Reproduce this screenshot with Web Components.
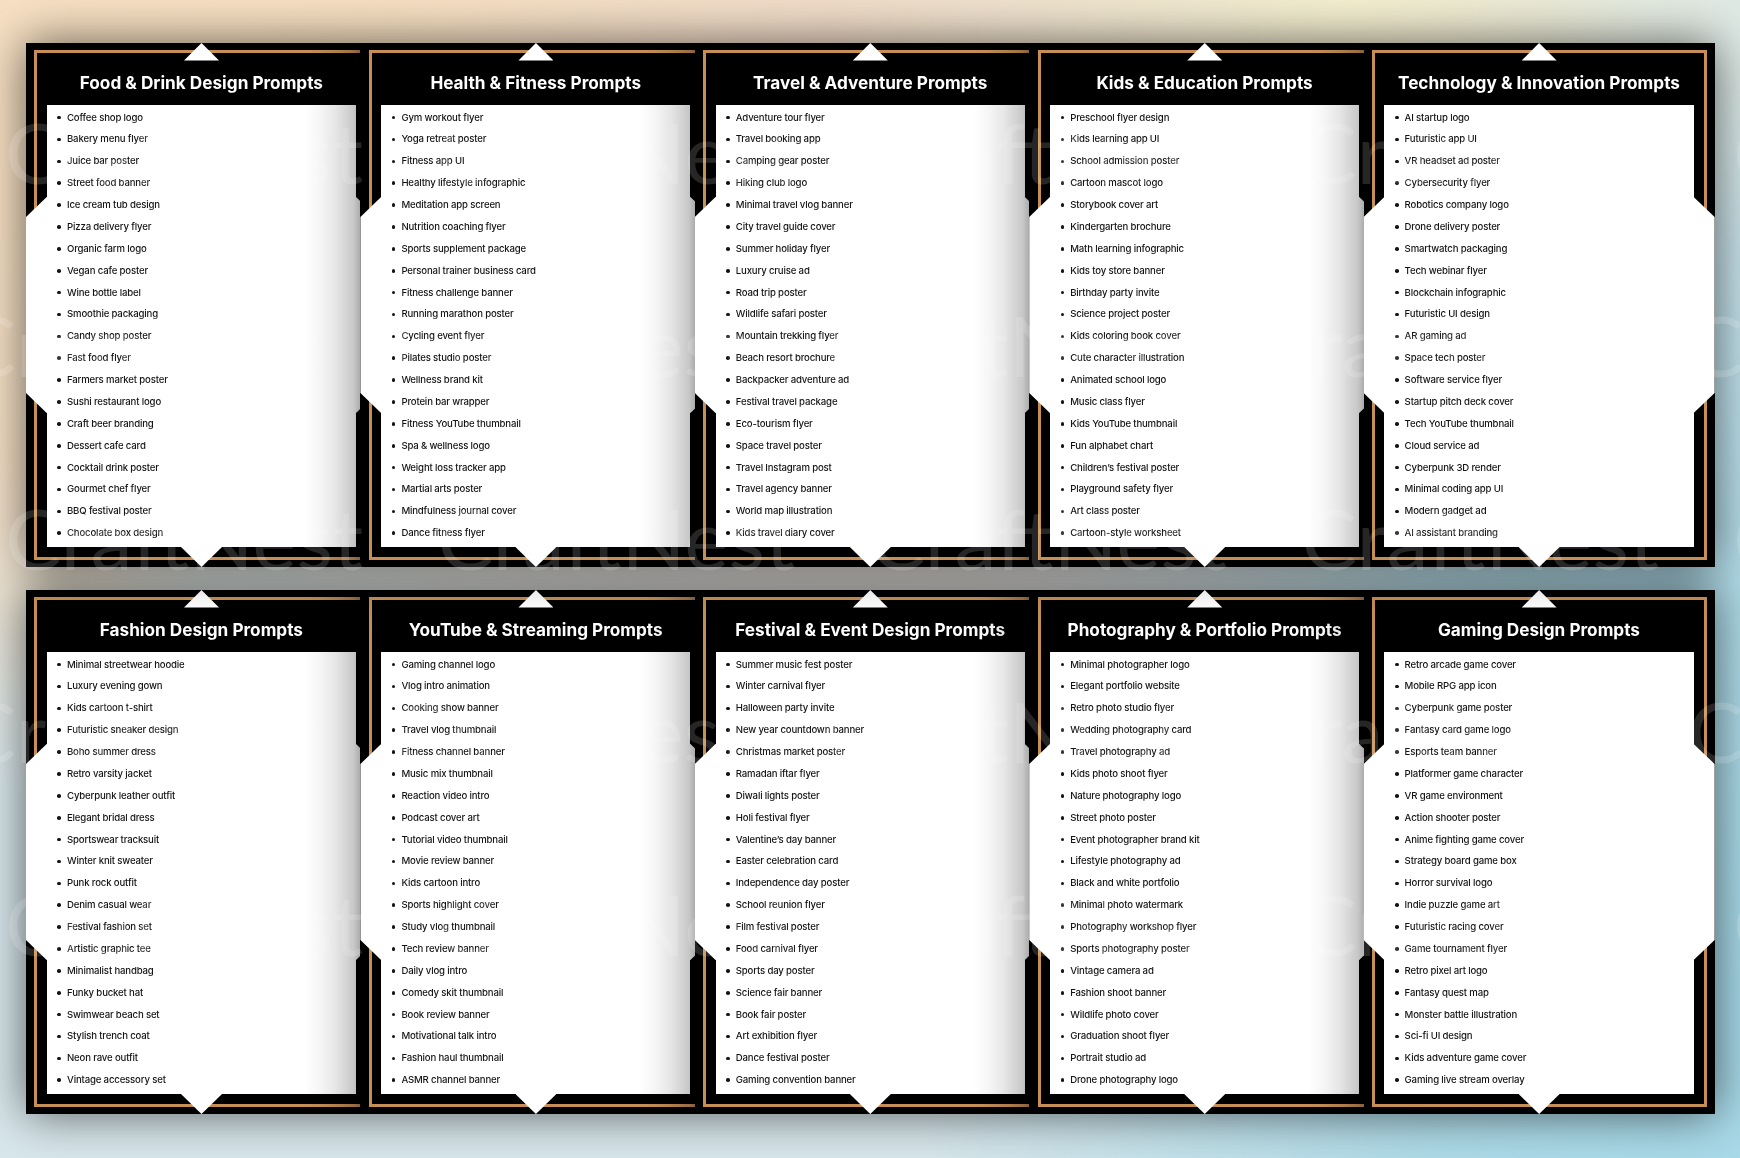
<!DOCTYPE html>
<html>
<head>
<meta charset="utf-8">
<title>Design Prompts</title>
<style>
  html, body { margin: 0; padding: 0; }
  body { width: 1740px; height: 1158px; overflow: hidden; font-family: "Inter", "Liberation Sans", sans-serif; }
</style>
</head>
<body>
<prompt-board>
  <prompt-sheet style="z-index:2">
    <prompt-panel heading="Food &amp; Drink Design Prompts">
      <li>Coffee shop logo</li><li>Bakery menu flyer</li><li>Juice bar poster</li><li>Street food banner</li><li>Ice cream tub design</li><li>Pizza delivery flyer</li><li>Organic farm logo</li><li>Vegan cafe poster</li><li>Wine bottle label</li><li>Smoothie packaging</li><li>Candy shop poster</li><li>Fast food flyer</li><li>Farmers market poster</li><li>Sushi restaurant logo</li><li>Craft beer branding</li><li>Dessert cafe card</li><li>Cocktail drink poster</li><li>Gourmet chef flyer</li><li>BBQ festival poster</li><li>Chocolate box design</li>
    </prompt-panel>
    <prompt-panel heading="Health &amp; Fitness Prompts">
      <li>Gym workout flyer</li><li>Yoga retreat poster</li><li>Fitness app UI</li><li>Healthy lifestyle infographic</li><li>Meditation app screen</li><li>Nutrition coaching flyer</li><li>Sports supplement package</li><li>Personal trainer business card</li><li>Fitness challenge banner</li><li>Running marathon poster</li><li>Cycling event flyer</li><li>Pilates studio poster</li><li>Wellness brand kit</li><li>Protein bar wrapper</li><li>Fitness YouTube thumbnail</li><li>Spa &amp; wellness logo</li><li>Weight loss tracker app</li><li>Martial arts poster</li><li>Mindfulness journal cover</li><li>Dance fitness flyer</li>
    </prompt-panel>
    <prompt-panel heading="Travel &amp; Adventure Prompts">
      <li>Adventure tour flyer</li><li>Travel booking app</li><li>Camping gear poster</li><li>Hiking club logo</li><li>Minimal travel vlog banner</li><li>City travel guide cover</li><li>Summer holiday flyer</li><li>Luxury cruise ad</li><li>Road trip poster</li><li>Wildlife safari poster</li><li>Mountain trekking flyer</li><li>Beach resort brochure</li><li>Backpacker adventure ad</li><li>Festival travel package</li><li>Eco-tourism flyer</li><li>Space travel poster</li><li>Travel Instagram post</li><li>Travel agency banner</li><li>World map illustration</li><li>Kids travel diary cover</li>
    </prompt-panel>
    <prompt-panel heading="Kids &amp; Education Prompts">
      <li>Preschool flyer design</li><li>Kids learning app UI</li><li>School admission poster</li><li>Cartoon mascot logo</li><li>Storybook cover art</li><li>Kindergarten brochure</li><li>Math learning infographic</li><li>Kids toy store banner</li><li>Birthday party invite</li><li>Science project poster</li><li>Kids coloring book cover</li><li>Cute character illustration</li><li>Animated school logo</li><li>Music class flyer</li><li>Kids YouTube thumbnail</li><li>Fun alphabet chart</li><li>Children’s festival poster</li><li>Playground safety flyer</li><li>Art class poster</li><li>Cartoon-style worksheet</li>
    </prompt-panel>
    <prompt-panel heading="Technology &amp; Innovation Prompts">
      <li>AI startup logo</li><li>Futuristic app UI</li><li>VR headset ad poster</li><li>Cybersecurity flyer</li><li>Robotics company logo</li><li>Drone delivery poster</li><li>Smartwatch packaging</li><li>Tech webinar flyer</li><li>Blockchain infographic</li><li>Futuristic UI design</li><li>AR gaming ad</li><li>Space tech poster</li><li>Software service flyer</li><li>Startup pitch deck cover</li><li>Tech YouTube thumbnail</li><li>Cloud service ad</li><li>Cyberpunk 3D render</li><li>Minimal coding app UI</li><li>Modern gadget ad</li><li>AI assistant branding</li>
    </prompt-panel>
  </prompt-sheet>
  <prompt-sheet style="z-index:1">
    <prompt-panel heading="Fashion Design Prompts">
      <li>Minimal streetwear hoodie</li><li>Luxury evening gown</li><li>Kids cartoon t-shirt</li><li>Futuristic sneaker design</li><li>Boho summer dress</li><li>Retro varsity jacket</li><li>Cyberpunk leather outfit</li><li>Elegant bridal dress</li><li>Sportswear tracksuit</li><li>Winter knit sweater</li><li>Punk rock outfit</li><li>Denim casual wear</li><li>Festival fashion set</li><li>Artistic graphic tee</li><li>Minimalist handbag</li><li>Funky bucket hat</li><li>Swimwear beach set</li><li>Stylish trench coat</li><li>Neon rave outfit</li><li>Vintage accessory set</li>
    </prompt-panel>
    <prompt-panel heading="YouTube &amp; Streaming Prompts">
      <li>Gaming channel logo</li><li>Vlog intro animation</li><li>Cooking show banner</li><li>Travel vlog thumbnail</li><li>Fitness channel banner</li><li>Music mix thumbnail</li><li>Reaction video intro</li><li>Podcast cover art</li><li>Tutorial video thumbnail</li><li>Movie review banner</li><li>Kids cartoon intro</li><li>Sports highlight cover</li><li>Study vlog thumbnail</li><li>Tech review banner</li><li>Daily vlog intro</li><li>Comedy skit thumbnail</li><li>Book review banner</li><li>Motivational talk intro</li><li>Fashion haul thumbnail</li><li>ASMR channel banner</li>
    </prompt-panel>
    <prompt-panel heading="Festival &amp; Event Design Prompts">
      <li>Summer music fest poster</li><li>Winter carnival flyer</li><li>Halloween party invite</li><li>New year countdown banner</li><li>Christmas market poster</li><li>Ramadan iftar flyer</li><li>Diwali lights poster</li><li>Holi festival flyer</li><li>Valentine’s day banner</li><li>Easter celebration card</li><li>Independence day poster</li><li>School reunion flyer</li><li>Film festival poster</li><li>Food carnival flyer</li><li>Sports day poster</li><li>Science fair banner</li><li>Book fair poster</li><li>Art exhibition flyer</li><li>Dance festival poster</li><li>Gaming convention banner</li>
    </prompt-panel>
    <prompt-panel heading="Photography &amp; Portfolio Prompts">
      <li>Minimal photographer logo</li><li>Elegant portfolio website</li><li>Retro photo studio flyer</li><li>Wedding photography card</li><li>Travel photography ad</li><li>Kids photo shoot flyer</li><li>Nature photography logo</li><li>Street photo poster</li><li>Event photographer brand kit</li><li>Lifestyle photography ad</li><li>Black and white portfolio</li><li>Minimal photo watermark</li><li>Photography workshop flyer</li><li>Sports photography poster</li><li>Vintage camera ad</li><li>Fashion shoot banner</li><li>Wildlife photo cover</li><li>Graduation shoot flyer</li><li>Portrait studio ad</li><li>Drone photography logo</li>
    </prompt-panel>
    <prompt-panel heading="Gaming Design Prompts">
      <li>Retro arcade game cover</li><li>Mobile RPG app icon</li><li>Cyberpunk game poster</li><li>Fantasy card game logo</li><li>Esports team banner</li><li>Platformer game character</li><li>VR game environment</li><li>Action shooter poster</li><li>Anime fighting game cover</li><li>Strategy board game box</li><li>Horror survival logo</li><li>Indie puzzle game art</li><li>Futuristic racing cover</li><li>Game tournament flyer</li><li>Retro pixel art logo</li><li>Fantasy quest map</li><li>Monster battle illustration</li><li>Sci-fi UI design</li><li>Kids adventure game cover</li><li>Gaming live stream overlay</li>
    </prompt-panel>
  </prompt-sheet>
  <brand-watermark></brand-watermark>
</prompt-board>

<script>
class PromptBoard extends HTMLElement {
  connectedCallback() {
    this.attachShadow({ mode: 'open' });
    this.shadowRoot.innerHTML = `
      <style>
        :host {
          display: flex;
          flex-direction: column;
          gap: 23px;
          position: relative;
          box-sizing: border-box;
          width: 1740px;
          height: 1158px;
          padding: 43px 0 0 26px;
          overflow: hidden;
          background:
            radial-gradient(ellipse 520px 360px at 1350px 0, #f4efcf 0%, rgba(244,239,207,0) 100%),
            radial-gradient(ellipse 900px 700px at 150px 0, #f7e0c2 0%, #f6dfc3 35%, rgba(246,223,195,0) 100%),
            radial-gradient(ellipse 260px 640px at 0 150px, #f4e4cc 0%, #f3e2ca 50%, rgba(243,226,202,0) 100%),
            radial-gradient(ellipse 800px 640px at 850px 120px, #f0dccb 0%, #e8d9d0 55%, rgba(232,217,208,0) 100%),
            radial-gradient(ellipse 820px 1000px at 1740px 1020px, #a6d9e8 0%, #aedbe8 40%, rgba(174,219,232,0) 100%),
            #d8e7ec;
        }
      </style>
      <slot></slot>
    `;
  }
}

class PromptSheet extends HTMLElement {
  connectedCallback() {
    this.attachShadow({ mode: 'open' });
    this.shadowRoot.innerHTML = `
      <style>
        :host {
          display: flex;
          position: relative;
          width: 1689px;
          height: 524px;
          box-shadow: 0 0 44px rgba(0,0,0,.6);
        }
        .inner { display: flex; filter: blur(.3px); }
      </style>
      <div class="inner"><slot></slot></div>
    `;
  }
}

class PromptPanel extends HTMLElement {
  connectedCallback() {
    this.attachShadow({ mode: 'open' });
    this.shadowRoot.innerHTML = `
      <style>
        :host {
          display: flex;
          flex-direction: column;
          position: relative;
          flex: none;
          box-sizing: border-box;
          width: 351px;
          height: 524px;
          padding: 0 21px 20px 20.7px;
          background: #000;
        }
        :host(:not(:first-child)) { margin-left: -16.6px; }
        :host(:first-child) .cast { display: none; }
        .cast {
          position: absolute;
          top: 0;
          bottom: 0;
          left: -56px;
          width: 56px;
          background: linear-gradient(90deg, rgba(0,0,0,0) 0, rgba(0,0,0,.03) 14px, rgba(0,0,0,.1) 32px, rgba(0,0,0,.22) 50px, rgba(0,0,0,.33) 56px);
        }
        .frame {
          position: absolute;
          inset: 7.3px 8px 7px 8.4px;
          border: 3.2px solid #c78f55;
        }
        .wings {
          position: absolute;
          inset: 154px 0;
          background: #fff;
          clip-path: polygon(0 20px, 20.7px 0, calc(100% - 21px) 0, 100% 20px, 100% calc(100% - 20px), calc(100% - 21px) 100%, 20.7px 100%, 0 calc(100% - 20px));
        }
        .tip-top, .tip-bottom {
          position: absolute;
          left: 50%;
          background: #fff;
        }
        .tip-top {
          top: 0;
          width: 35px;
          height: 17.5px;
          margin-left: -17.5px;
          clip-path: polygon(50% 0, 100% 100%, 0 100%);
        }
        .tip-bottom {
          bottom: 0;
          width: 41px;
          height: 20px;
          margin-left: -20.5px;
          clip-path: polygon(0 0, 100% 0, 50% 100%);
        }
        h2 {
          display: flex;
          align-items: center;
          justify-content: center;
          position: relative;
          flex: none;
          height: 62px;
          margin: 0;
          padding-top: 17px;
          box-sizing: border-box;
          color: #fff;
          font: 700 17.2px "Inter", "Liberation Sans", sans-serif;
          white-space: nowrap;
        }
        ul {
          position: relative;
          flex: 1;
          margin: 0;
          padding: 1.6px 0 0 20.3px;
          background: #fff;
          list-style: none;
        }
        ::slotted(li) {
          position: relative;
          height: 21.88px;
          color: #141414;
          font: 500 9.6px/21.88px "Inter", "Liberation Sans", sans-serif;
          letter-spacing: -.16px;
          white-space: nowrap;
        }
        ::slotted(li)::before {
          content: "";
          position: absolute;
          left: -9.6px;
          top: 9.2px;
          width: 3.6px;
          height: 3.6px;
          border-radius: 50%;
          background: #141414;
        }
      </style>
      <div class="cast"></div>
      <div class="frame"></div>
      <div class="wings"></div>
      <div class="tip-top"></div>
      <div class="tip-bottom"></div>
      <h2>${this.getAttribute('heading').replace(/&/g, '&amp;')}</h2>
      <ul><slot></slot></ul>
    `;
  }
}

class BrandWatermark extends HTMLElement {
  connectedCallback() {
    this.attachShadow({ mode: 'open' });
    const line = '<span>CraftNest</span>'.repeat(5);
    this.shadowRoot.innerHTML = `
      <style>
        :host {
          display: flex;
          flex-direction: column;
          gap: 73px;
          position: absolute;
          inset: 0;
          z-index: 5;
          padding-top: 92px;
          overflow: hidden;
          pointer-events: none;
          color: rgba(255,255,255,.15);
          font: 400 84px/120px "Lato", "Liberation Sans", sans-serif;
        }
        div { display: flex; white-space: nowrap; }
        div.even { margin-left: 5px; }
        div.odd { margin-left: -40px; }
        span { flex: none; width: 432px; }
      </style>
      <div class="even">${line}</div>
      <div class="odd">${line}</div>
      <div class="even">${line}</div>
      <div class="odd">${line}</div>
      <div class="even">${line}</div>
    `;
  }
}

customElements.define('prompt-board', PromptBoard);
customElements.define('prompt-sheet', PromptSheet);
customElements.define('prompt-panel', PromptPanel);
customElements.define('brand-watermark', BrandWatermark);
</script>
</body>
</html>
